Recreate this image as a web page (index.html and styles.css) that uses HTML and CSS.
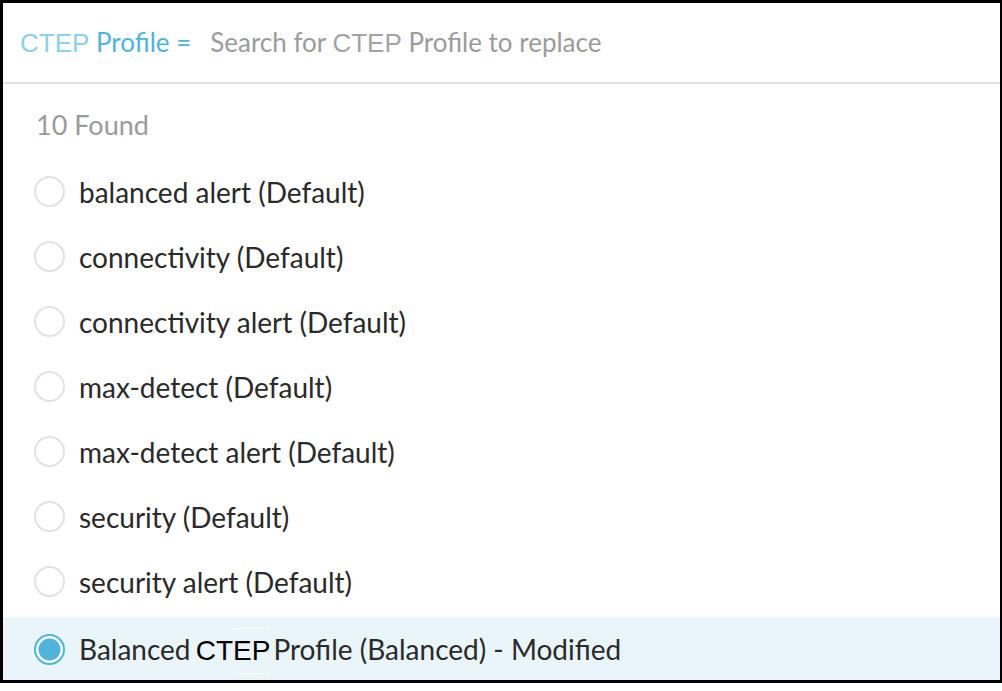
FILE: index.html
```html
<!DOCTYPE html>
<html>
<head>
<meta charset="utf-8">
<link rel="stylesheet" href="styles.css">
</head>
<body>
<div class="panel">
  <div class="search">
    <span class="label"><span class="hl">CTEP</span> Profile =</span>
    <span class="placeholder">Search for <span class="hl">CTEP</span> Profile to replace</span>
  </div>
  <div class="results">
    <div class="count">10 Found</div>
    <ul class="list">
      <li class="item"><span class="radio"></span><span class="text">balanced alert (Default)</span></li>
      <li class="item"><span class="radio"></span><span class="text">connectivity (Default)</span></li>
      <li class="item"><span class="radio"></span><span class="text">connectivity alert (Default)</span></li>
      <li class="item"><span class="radio"></span><span class="text">max-detect (Default)</span></li>
      <li class="item"><span class="radio"></span><span class="text">max-detect alert (Default)</span></li>
      <li class="item"><span class="radio"></span><span class="text">security (Default)</span></li>
      <li class="item"><span class="radio"></span><span class="text">security alert (Default)</span></li>
      <li class="item selected"><span class="radio"></span><span class="text">Balanced <mark class="match">CT<span class="mark-edge">EP</span></mark>Profile (Balanced) - Modified</span></li>
    </ul>
  </div>
</div>
</body>
</html>
```

FILE: styles.css
```css
* { box-sizing: border-box; }
html, body { margin: 0; padding: 0; background: #fff; }
body { font-family: Lato, "Open Sans", sans-serif; }

.panel {
  width: 1002px;
  height: 683px;
  border-style: solid;
  border-color: #000;
  border-width: 3px 2px 3px 3px;
  display: flex;
  flex-direction: column;
  overflow: hidden;
}

.search {
  flex: none;
  height: 81px;
  border-bottom: 2px solid #e2e2e2;
  display: flex;
  align-items: center;
  padding: 1px 0 1px 17px;
  font-size: 26px;
  gap: 19px;
}
.label { color: #4fb3dc; }
.label .hl { color: #8dd0ea; font-family: "Liberation Sans", Arial, sans-serif; }
.placeholder { color: #9b9b9b; }
.placeholder .hl { color: #a3a3a3; font-family: "Liberation Sans", Arial, sans-serif; }

.results { flex: none; display: flex; flex-direction: column; }
.count {
  flex: none;
  height: 75px;
  display: flex;
  align-items: center;
  padding-left: 33px;
  padding-top: 6px;
  font-size: 27px;
  color: #9a9a9a;
}
.list { list-style: none; margin: 0; padding: 0; }
.item {
  height: 65px;
  display: flex;
  align-items: center;
  padding-left: 31px;
  gap: 14px;
  font-size: 28px;
  color: #2a2a2a;
}
.radio {
  width: 31px;
  height: 31px;
  border-radius: 50%;
  border: 2px solid #e2e2e2;
  background: #fff;
  flex: none;
}
.item.selected { background: #eaf5fa; height: 63px; margin-top: 3px; padding-top: 2px; }
.item.selected .radio {
  border: 2px solid #4fb3dc;
  background: radial-gradient(circle, #4fb3dc 0 10.5px, #fff 11.5px);
}
.match {
  background: transparent;
  color: #000;
  font-family: "Liberation Sans", Arial, sans-serif;
  margin-left: -2px;
  margin-right: 3px;
}
.mark-edge {
  border-top: 1px solid #fff;
  border-bottom: 1px solid #fff;
  padding: 6px 0 7px;
}
```
